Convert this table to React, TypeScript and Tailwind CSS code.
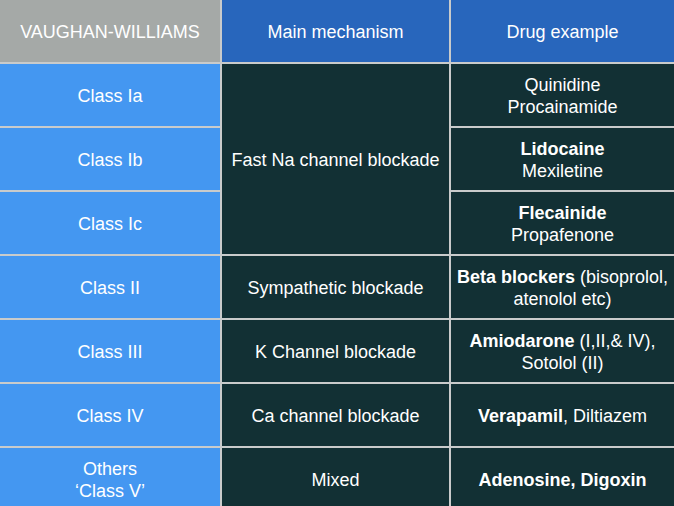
const rows = [
  { cls: ["Class Ia"], drug: <>Quinidine<br />Procainamide</> },
  { cls: ["Class Ib"], drug: <><b>Lidocaine</b><br />Mexiletine</> },
  { cls: ["Class Ic"], drug: <><b>Flecainide</b><br />Propafenone</> },
  { cls: ["Class II"], mech: "Sympathetic blockade", drug: <><b>Beta blockers</b> (bisoprolol,<br />atenolol etc)</> },
  { cls: ["Class III"], mech: "K Channel blockade", drug: <><b>Amiodarone</b> (I,II,&amp; IV),<br />Sotolol (II)</> },
  { cls: ["Class IV"], mech: "Ca channel blockade", drug: <><b>Verapamil</b>, Diltiazem</> },
  { cls: ["Others", "\u2018Class V\u2019"], mech: "Mixed", drug: <b>Adenosine, Digoxin</b> },
]

const cell = "flex items-center justify-center pt-[1px] text-center text-white leading-[22px]"

export default function App() {
  return (
    <div className="h-[506px] w-[674px] overflow-hidden bg-[#c9cbcb] font-['Liberation_Sans',Arial,sans-serif] text-[18px]">
      <div className="grid grid-cols-[220px_227px_223px] grid-rows-[62px_repeat(7,62px)] gap-[2px]">
        {/* header */}
        <div className={cn(cell, "bg-[#a5a9a7]")}>VAUGHAN-WILLIAMS</div>
        <div className={cn(cell, "bg-[#2866bc]")}>Main mechanism</div>
        <div className={cn(cell, "bg-[#2866bc]")}>Drug example</div>

        {rows.map((r, i) => (
          <Row key={i} index={i} {...r} />
        ))}
      </div>
    </div>
  )
}

function cn(...parts: string[]) {
  return parts.join(" ")
}

function Row({
  index,
  cls,
  mech,
  drug,
}: {
  index: number
  cls: string[]
  mech?: string
  drug: React.ReactNode
}) {
  return (
    <>
      <div className={cn(cell, "bg-[#4497f1]")}>
        <div>
          {cls.map((c) => (
            <div key={c}>{c}</div>
          ))}
        </div>
      </div>
      {index === 0 && (
        <div className={cn(cell, "row-span-3 bg-[#123034]")}>Fast Na channel blockade</div>
      )}
      {mech && <div className={cn(cell, "bg-[#123034]")}>{mech}</div>}
      <div className={cn(cell, "bg-[#123034]")}>
        <div>{drug}</div>
      </div>
    </>
  )
}
